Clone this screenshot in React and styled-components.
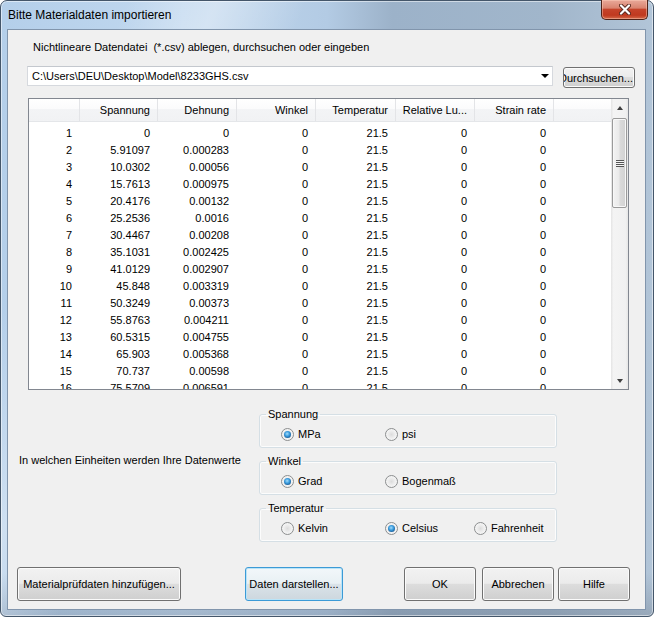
import React from 'react';
import styled, { createGlobalStyle } from 'styled-components';

// Global reset
const GlobalStyle = createGlobalStyle`
  html, body {
    margin: 0;
    padding: 0;
    background: #ffffff;
  }
  body {
    font-family: "Liberation Sans", Arial, sans-serif;
    font-size: 11px;
    color: #000000;
  }
  * {
    box-sizing: border-box;
  }
`;

// Table data (Spannung, Dehnung)
const rows = [
    ['0', '0'],
    ['5.91097', '0.000283'],
    ['10.0302', '0.00056'],
    ['15.7613', '0.000975'],
    ['20.4176', '0.00132'],
    ['25.2536', '0.0016'],
    ['30.4467', '0.00208'],
    ['35.1031', '0.002425'],
    ['41.0129', '0.002907'],
    ['45.848', '0.003319'],
    ['50.3249', '0.00373'],
    ['55.8763', '0.004211'],
    ['60.5315', '0.004755'],
    ['65.903', '0.005368'],
    ['70.737', '0.00598'],
    ['75.5709', '0.006591'],
];

const headers = ['', 'Spannung', 'Dehnung', 'Winkel', 'Temperatur', 'Relative Lu...', 'Strain rate'];

const groups = [
    { title: 'Spannung', options: ['MPa', 'psi'], checked: 0 },
    { title: 'Winkel', options: ['Grad', 'Bogenmaß'], checked: 0 },
    { title: 'Temperatur', options: ['Kelvin', 'Celsius', 'Fahrenheit'], checked: 1 },
];

const CloseGlyph = () => (
    <svg width="12" height="11" viewBox="0 0 12 11">
        <path d="M2 1.5 L10 9.5 M10 1.5 L2 9.5" stroke="#5b2a20" strokeWidth="4" strokeLinecap="round" fill="none" />
        <path d="M2 1.5 L10 9.5 M10 1.5 L2 9.5" stroke="#ffffff" strokeWidth="2.2" strokeLinecap="round" fill="none" />
    </svg>
);

const Radio = ({ label, checked }) => (
    <StyledRadio>
        <StyledDot $checked={checked} />
        <span>{label}</span>
    </StyledRadio>
);

const App = () => {
    return (
        <>
            <GlobalStyle />
            <StyledWindow>
                <StyledTitleBar>
                    <StyledTitle>Bitte Materialdaten importieren</StyledTitle>
                    <StyledClose>
                        <CloseGlyph />
                    </StyledClose>
                </StyledTitleBar>
                <StyledClient>
                    <StyledIntro>Nichtlineare Datendatei&nbsp; (*.csv) ablegen, durchsuchen oder eingeben</StyledIntro>
                    <StyledPathRow>
                        <StyledCombo>
                            <span>C:\Users\DEU\Desktop\Model\8233GHS.csv</span>
                            <StyledArrow />
                        </StyledCombo>
                        <StyledButton $width={72} $height={21} $gap={10} $clip>
                            <span>Durchsuchen...</span>
                        </StyledButton>
                    </StyledPathRow>
                    <StyledTable>
                        <StyledGridArea>
                            <StyledHeader>
                                {headers.map((h, i) => (
                                    <StyledHeadCell key={i}>{h}</StyledHeadCell>
                                ))}
                                <StyledHeadFiller />
                            </StyledHeader>
                            <StyledBody>
                                {rows.map((r, i) => (
                                    <StyledRow key={i}>
                                        <StyledCell>{i + 1}</StyledCell>
                                        <StyledCell>{r[0]}</StyledCell>
                                        <StyledCell>{r[1]}</StyledCell>
                                        <StyledCell>0</StyledCell>
                                        <StyledCell>21.5</StyledCell>
                                        <StyledCell>0</StyledCell>
                                        <StyledCell>0</StyledCell>
                                        <span />
                                    </StyledRow>
                                ))}
                            </StyledBody>
                        </StyledGridArea>
                        <StyledScrollbar>
                            <StyledScrollArrow $up />
                            <StyledThumb>
                                <StyledGrip />
                            </StyledThumb>
                            <StyledScrollArrow />
                        </StyledScrollbar>
                    </StyledTable>
                    <StyledUnits>
                        <StyledUnitsLabel>In welchen Einheiten werden Ihre Datenwerte</StyledUnitsLabel>
                        <StyledGroups>
                            {groups.map((g) => (
                                <StyledGroup key={g.title}>
                                    <StyledLegend>{g.title}</StyledLegend>
                                    <StyledOptions>
                                        {g.options.map((o, i) => (
                                            <Radio key={o} label={o} checked={i === g.checked} />
                                        ))}
                                    </StyledOptions>
                                </StyledGroup>
                            ))}
                        </StyledGroups>
                    </StyledUnits>
                    <StyledFooter>
                        <StyledButton $width={164} $height={34}>Materialprüfdaten hinzufügen...</StyledButton>
                        <StyledButton $width={98} $height={34} $gap={64} $primary>Daten darstellen...</StyledButton>
                        <StyledButton $width={72} $height={34} $gap={61}>OK</StyledButton>
                        <StyledButton $width={72} $height={34} $gap={6}>Abbrechen</StyledButton>
                        <StyledButton $width={72} $height={34} $gap={4}>Hilfe</StyledButton>
                    </StyledFooter>
                </StyledClient>
            </StyledWindow>
        </>
    );
};

const StyledWindow = styled.div`
    width: 654px;
    height: 617px;
    border: 1px solid #44566a;
    border-radius: 7px 7px 6px 6px;
    padding: 0 7px 6px 6px;
    display: flex;
    flex-direction: column;
    background:
        linear-gradient(112deg, rgba(255,255,255,0) 14%, rgba(255,255,255,0.35) 24%, rgba(255,255,255,0) 34%),
        linear-gradient(to bottom, rgba(0,0,0,0) 93%, rgba(70,80,95,0.25) 100%),
        linear-gradient(to right, #b4cfea 0%, #c1d8ef 28%, #b3cbe4 50%, #9cb2c9 60%, #a1b6cb 84%, #b2c5d8 100%);
    box-shadow: inset 0 0 0 1px rgba(255,255,255,0.5);
`;

const StyledTitleBar = styled.div`
    height: 28px;
    margin: 0 -7px 0 -6px;
    display: flex;
    justify-content: space-between;
    align-items: flex-start;
`;

const StyledTitle = styled.div`
    margin: 7px 0 0 7px;
    font-size: 12px;
    line-height: 14px;
    color: #000000;
`;

const StyledClose = styled.div`
    width: 47px;
    height: 20px;
    margin: -1px 5px 0 0;
    border: 1px solid #4e2319;
    border-top: none;
    border-radius: 0 0 5px 5px;
    display: flex;
    align-items: center;
    justify-content: center;
    background: linear-gradient(to bottom, #e9a99a 0%, #d98470 42%, #c5432a 50%, #c0391f 80%, #d46a4a 100%);
    box-shadow: inset 0 0 0 1px rgba(255,210,190,0.45);
`;

const StyledClient = styled.div`
    flex: 1;
    border: 1px solid #8195ac;
    background: #f0f0f0;
    display: flex;
    flex-direction: column;
`;

const StyledIntro = styled.div`
    margin: 10px 0 0 25px;
    line-height: 14px;
`;

const StyledPathRow = styled.div`
    display: flex;
    height: 22px;
    margin: 12px 0 0 19px;
`;

const StyledCombo = styled.div`
    width: 526px;
    height: 20px;
    background: #ffffff;
    border: 1px solid #d6d9de;
    border-top-color: #c4c8ce;
    display: flex;
    align-items: center;
    justify-content: space-between;
    padding: 0 3px 0 4px;
    line-height: 14px;
`;

const StyledArrow = styled.span`
    width: 0;
    height: 0;
    border-left: 4px solid transparent;
    border-right: 4px solid transparent;
    border-top: 4px solid #000000;
`;

const StyledButton = styled.div`
    width: ${(p) => p.$width}px;
    height: ${(p) => p.$height}px;
    margin-left: ${(p) => p.$gap || 0}px;
    margin-top: ${(p) => (p.$clip ? 1 : 0)}px;
    border: 1px solid ${(p) => (p.$primary ? '#3c9ad6' : '#707070')};
    border-radius: 3px;
    display: flex;
    align-items: center;
    justify-content: ${(p) => (p.$clip ? 'flex-end' : 'center')};
    padding-right: ${(p) => (p.$clip ? 1 : 0)}px;
    overflow: hidden;
    white-space: nowrap;
    background: ${(p) => (p.$primary
        ? 'linear-gradient(to bottom, #f2f7fa 0%, #e9f0f4 48%, #dae3e9 50%, #cdd7de 100%)'
        : 'linear-gradient(to bottom, #f2f2f2 0%, #ebebeb 48%, #dddddd 50%, #cfcfcf 100%)')};
    box-shadow: inset 0 0 0 1px ${(p) => (p.$primary ? '#b9e4f8' : '#fbfbfb')};
    line-height: 14px;
    span {
        flex-shrink: 0;
    }
`;

const StyledTable = styled.div`
    width: 601px;
    height: 292px;
    margin: 10px 0 0 20px;
    border: 1px solid #828790;
    background: #ffffff;
    display: flex;
`;

const StyledGridArea = styled.div`
    flex: 1;
    overflow: hidden;
`;

const columns = '51px 78px 79px 79px 80px 79px 79px 1fr';

const StyledHeader = styled.div`
    display: grid;
    grid-template-columns: ${columns};
    height: 23px;
    border-bottom: 1px solid #e4e6e9;
    background: linear-gradient(to bottom, #ffffff 0%, #fbfbfc 45%, #f3f4f6 46%, #f1f2f4 100%);
`;

const StyledHeadCell = styled.div`
    line-height: 22px;
    text-align: right;
    padding-right: 7px;
    border-right: 1px solid #e3e4e7;
    white-space: nowrap;
    overflow: hidden;
`;

const StyledHeadFiller = styled.div``;

const StyledBody = styled.div`
    padding-top: 3px;
`;

const StyledRow = styled.div`
    display: grid;
    grid-template-columns: ${columns};
    height: 17px;
`;

const StyledCell = styled.div`
    line-height: 17px;
    text-align: right;
    padding-right: 8px;
    white-space: nowrap;
`;

const StyledScrollbar = styled.div`
    width: 17px;
    display: flex;
    flex-direction: column;
    align-items: center;
    background: linear-gradient(to right, #e4e4e4 0%, #f4f4f4 15%, #f1f1f1 85%, #e6e6e6 100%);
`;

const StyledScrollArrow = styled.div`
    height: 17px;
    width: 17px;
    display: flex;
    align-items: center;
    justify-content: center;
    margin-top: ${(p) => (p.$up ? 0 : 'auto')};
    &::before {
        content: '';
        width: 0;
        height: 0;
        border-left: 3.5px solid transparent;
        border-right: 3.5px solid transparent;
        ${(p) => (p.$up ? 'border-bottom: 4px solid #3f3f3f;' : 'border-top: 4px solid #3f3f3f;')}
    }
`;

const StyledThumb = styled.div`
    width: 15px;
    height: 90px;
    margin-top: 2px;
    border: 1px solid #9a9a9a;
    border-radius: 2px;
    display: flex;
    align-items: center;
    justify-content: center;
    background: linear-gradient(to right, #f3f3f3 0%, #eaeaea 45%, #dadada 55%, #d2d2d2 100%);
    box-shadow: inset 0 0 0 1px #f8f8f8;
`;

const StyledGrip = styled.span`
    width: 8px;
    height: 7px;
    background: repeating-linear-gradient(to bottom, #555555 0px, #555555 1px, #f4f4f4 1px, #f4f4f4 2px);
`;

const StyledUnits = styled.div`
    display: flex;
    margin-top: 17px;
`;

const StyledUnitsLabel = styled.div`
    width: 251px;
    padding: 46px 0 0 11px;
    line-height: 14px;
    white-space: nowrap;
`;

const StyledGroups = styled.div`
    width: 298px;
    display: flex;
    flex-direction: column;
    gap: 6px;
`;

const StyledGroup = styled.fieldset`
    margin: 0;
    padding: 0;
    min-width: 0;
    border: 1px solid #d5dfe5;
    border-radius: 3px;
    box-shadow: inset 0 0 0 1px rgba(255,255,255,0.8);
`;

const StyledLegend = styled.legend`
    margin-left: 6px;
    padding: 0 2px;
    line-height: 14px;
    font-size: 11px;
`;

const StyledOptions = styled.div`
    display: grid;
    grid-template-columns: 104px 89px auto;
    padding: 6px 0 6px 21px;
    box-sizing: content-box;
    height: 14px;
`;

const StyledRadio = styled.div`
    display: flex;
    align-items: center;
    gap: 4px;
    line-height: 14px;
`;

const StyledDot = styled.span`
    width: 13px;
    height: 13px;
    border-radius: 50%;
    border: 1px solid #8c8e8f;
    flex-shrink: 0;
    display: flex;
    align-items: center;
    justify-content: center;
    background: radial-gradient(circle at 50% 50%, #dcdcdc 0%, #eeeeee 45%, #f7f7f7 80%, #e2e2e2 100%);
    &::after {
        content: '';
        display: ${(p) => (p.$checked ? 'block' : 'none')};
        width: 7px;
        height: 7px;
        border-radius: 50%;
        background: radial-gradient(circle at 45% 40%, #a6dcf9 0%, #3c9ee0 40%, #1b5f9a 75%, #123f66 100%);
    }
`;

const StyledFooter = styled.div`
    display: flex;
    margin-top: 25px;
    padding-left: 9px;
`;

export default App;
